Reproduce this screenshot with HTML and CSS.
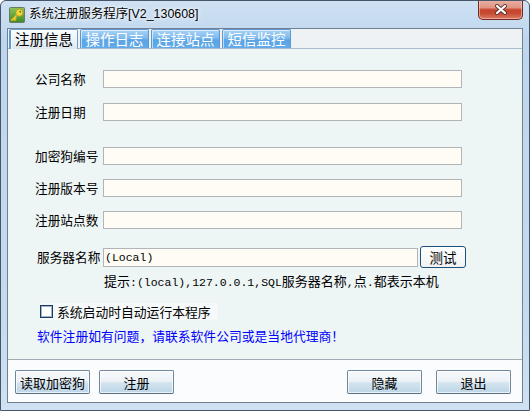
FILE: index.html
```html
<!DOCTYPE html>
<html>
<head>
    <title>系统注册服务程序</title>
    <meta charset="utf-8">
    <link rel="stylesheet" href="styles.css">
</head>
<body>
    <div class="window">
        <div class="titlebar">
            <svg class="app-icon" width="16" height="16" viewBox="0 0 16 16">
                <defs>
                    <linearGradient id="g" x1="0" y1="0" x2="0" y2="1">
                        <stop offset="0" stop-color="#8cc65a"/>
                        <stop offset="1" stop-color="#3f8a26"/>
                    </linearGradient>
                </defs>
                <rect x="0.5" y="0.5" width="15" height="15" rx="1" fill="url(#g)" stroke="#6b7a68"/>
                <path d="M8.2 7.8 L2.8 13.2 M4.4 11.6 L5.8 13 M5.6 10.4 L6.8 11.6" stroke="#e8c32a" stroke-width="1.8" stroke-linecap="round" fill="none"/>
                <circle cx="10.4" cy="5.6" r="3.6" fill="#f4d83c" stroke="#b8901a" stroke-width="0.8"/>
                <circle cx="11.2" cy="4.8" r="1" fill="#5a8a30"/>
            </svg>
            <span class="title">系统注册服务程序[V2_130608]</span>
            <div class="close-btn">
                <svg width="14" height="11" viewBox="0 0 14 11">
                    <path d="M3 2 L11 9 M11 2 L3 9" stroke="#5a3a36" stroke-width="4" stroke-linecap="round"/>
                    <path d="M3 2 L11 9 M11 2 L3 9" stroke="#ffffff" stroke-width="2.2" stroke-linecap="round"/>
                </svg>
            </div>
        </div>

        <div class="client">
            <div class="tabs">
                <div class="tab active">注册信息</div>
                <div class="tab">操作日志</div>
                <div class="tab">连接站点</div>
                <div class="tab">短信监控</div>
            </div>

            <div class="panel">
                <div class="row">
                    <label>公司名称</label>
                    <input class="field" type="text">
                </div>
                <div class="row gap-1">
                    <label>注册日期</label>
                    <input class="field" type="text">
                </div>
                <div class="row gap-2">
                    <label>加密狗编号</label>
                    <input class="field" type="text">
                </div>
                <div class="row gap-3">
                    <label>注册版本号</label>
                    <input class="field" type="text">
                </div>
                <div class="row gap-3">
                    <label>注册站点数</label>
                    <input class="field" type="text">
                </div>
                <div class="row gap-4">
                    <label class="server-label">服务器名称</label>
                    <input class="field server" type="text" value="(Local)">
                    <button class="test-btn">测试</button>
                </div>
                <div class="hint">提示<span class="mono">:(local),127.0.0.1,SQL</span>服务器名称<span class="mono">,</span>点<span class="mono">.</span>都表示本机</div>
                <div class="check">
                    <span class="box"></span>系统启动时自动运行本程序
                </div>
                <div class="notice">软件注册如有问题，请联系软件公司或是当地代理商！</div>
            </div>

            <div class="actions">
                <button class="btn">读取加密狗</button>
                <button class="btn btn-reg">注册</button>
                <button class="btn btn-hide">隐藏</button>
                <button class="btn btn-exit">退出</button>
            </div>
        </div>
    </div>
</body>
</html>
```

FILE: styles.css
```css
* { box-sizing: border-box; }
body { margin: 0; font-family: "Noto Sans CJK SC", sans-serif; background: #fff; }

.window { width: 530px; height: 411px; border: 1px solid #46566a; border-radius: 6px 6px 0 0; background: linear-gradient(#cfe1f3, #bed6ed 40px, #c4daef 300px, #cfe1f2); display: flex; flex-direction: column; overflow: hidden; }

.titlebar { height: 27px; display: flex; align-items: flex-start; flex-shrink: 0; }
.app-icon { margin: 6px 0 0 8px; flex-shrink: 0; }
.title { margin: 4px 0 0 4px; font-family: "Liberation Sans", "Noto Sans CJK SC", sans-serif; font-size: 12.4px; line-height: 18px; color: #000; text-shadow: 0 0 6px #fff, 0 0 3px #fff; }
.close-btn { margin: -1px 6px 0 auto; width: 45px; height: 20px; border: 1px solid #6e2a22; border-top: none; border-radius: 0 0 5px 5px; background: linear-gradient(#eab3a6, #e09483 40%, #c8432c 52%, #c74a32 70%, #dc7b62); display: flex; align-items: center; justify-content: center; box-shadow: inset 0 0 0 1px rgba(255,220,210,0.5); }

.client { flex: 1; margin: 0 6px 7px 6px; border: 1px solid #6f8193; background: #eef2f5; display: flex; flex-direction: column; }

.tabs { height: 19px; display: flex; gap: 2px; padding-left: 1px; flex-shrink: 0; }
.tab { width: 69px; height: 19px; font-size: 14.5px; line-height: 18px; text-align: center; color: #fff; background: linear-gradient(#a9d2f3, #7dbaee 45%, #5aa4e6 55%, #62aae8); border: 1px solid #5f98cf; border-bottom: none; border-radius: 2px 2px 0 0; box-shadow: inset 1px 1px 0 rgba(255,255,255,0.6); }
.tab.active { color: #000; background: linear-gradient(#fbfcfd, #eef3f7 50%, #dfe8ef); border-color: #6f9fcf; border-left: 2px solid #5e9ad2; height: 20px; position: relative; z-index: 1; }

.panel { height: 312px; flex-shrink: 0; background: #eef5f5; border-top: 1px solid #a8bdcd; border-bottom: 1px solid #a2abb4; padding: 21px 0 0 27px; }
.row { display: flex; align-items: center; }
.row label { width: 68px; font-size: 12.7px; line-height: 18px; color: #000; }
.row .server-label { padding-left: 2px; }
.gap-1 { margin-top: 15px; }
.gap-2 { margin-top: 26px; }
.gap-3 { margin-top: 14px; }
.gap-4 { margin-top: 17px; }

.field { width: 359px; height: 18px; border: 1px solid #b1b5ba; background: #fffcf6; outline: none; padding: 0 1px; font-family: "Liberation Mono", monospace; font-size: 11.5px; }
.field.server { width: 315px; height: 19px; }
.test-btn { margin-left: 2px; width: 46px; height: 22px; border: 1px solid #1f4f7d; border-radius: 3px; background: linear-gradient(#ffffff, #f1f2f3); font-family: "Noto Sans CJK SC", sans-serif; font-size: 13.5px; line-height: 18px; padding: 0; color: #000; }

.hint { margin: 6px 0 0 69px; font-size: 13px; line-height: 14px; color: #000; white-space: nowrap; }
.mono { font-family: "Liberation Mono", monospace; font-size: 11.5px; }

.check { display: inline-flex; align-items: center; margin: 13px 0 0 5px; height: 17px; padding-right: 7px; background: #f5f9f9; font-size: 12.8px; color: #000; }
.box { width: 13px; height: 13px; border: 1px solid #1b3b66; box-shadow: inset 0 0 0 1px #9fb3c8; background: #fff; margin-right: 4px; }

.notice { margin: 5px 0 0 2px; font-size: 12.8px; line-height: 15px; color: #0000ff; }

.actions { flex: 1; background: #fbfcfd; display: flex; align-items: flex-start; padding: 10px 11px 0 7px; }
.btn { width: 75px; height: 24px; border: 1px solid #70869b; border-bottom-color: #586e84; border-radius: 2px; background: linear-gradient(#f7f9fb, #edf2f6 45%, #d3e4ef 55%, #bcd5e6); box-shadow: inset 0 0 0 1px rgba(255,255,255,0.7); font-family: "Noto Sans CJK SC", sans-serif; font-size: 13px; color: #000; padding: 0; }
.btn-reg { margin-left: 9px; }
.btn-hide { margin-left: auto; }
.btn-exit { margin-left: 14px; }
```
